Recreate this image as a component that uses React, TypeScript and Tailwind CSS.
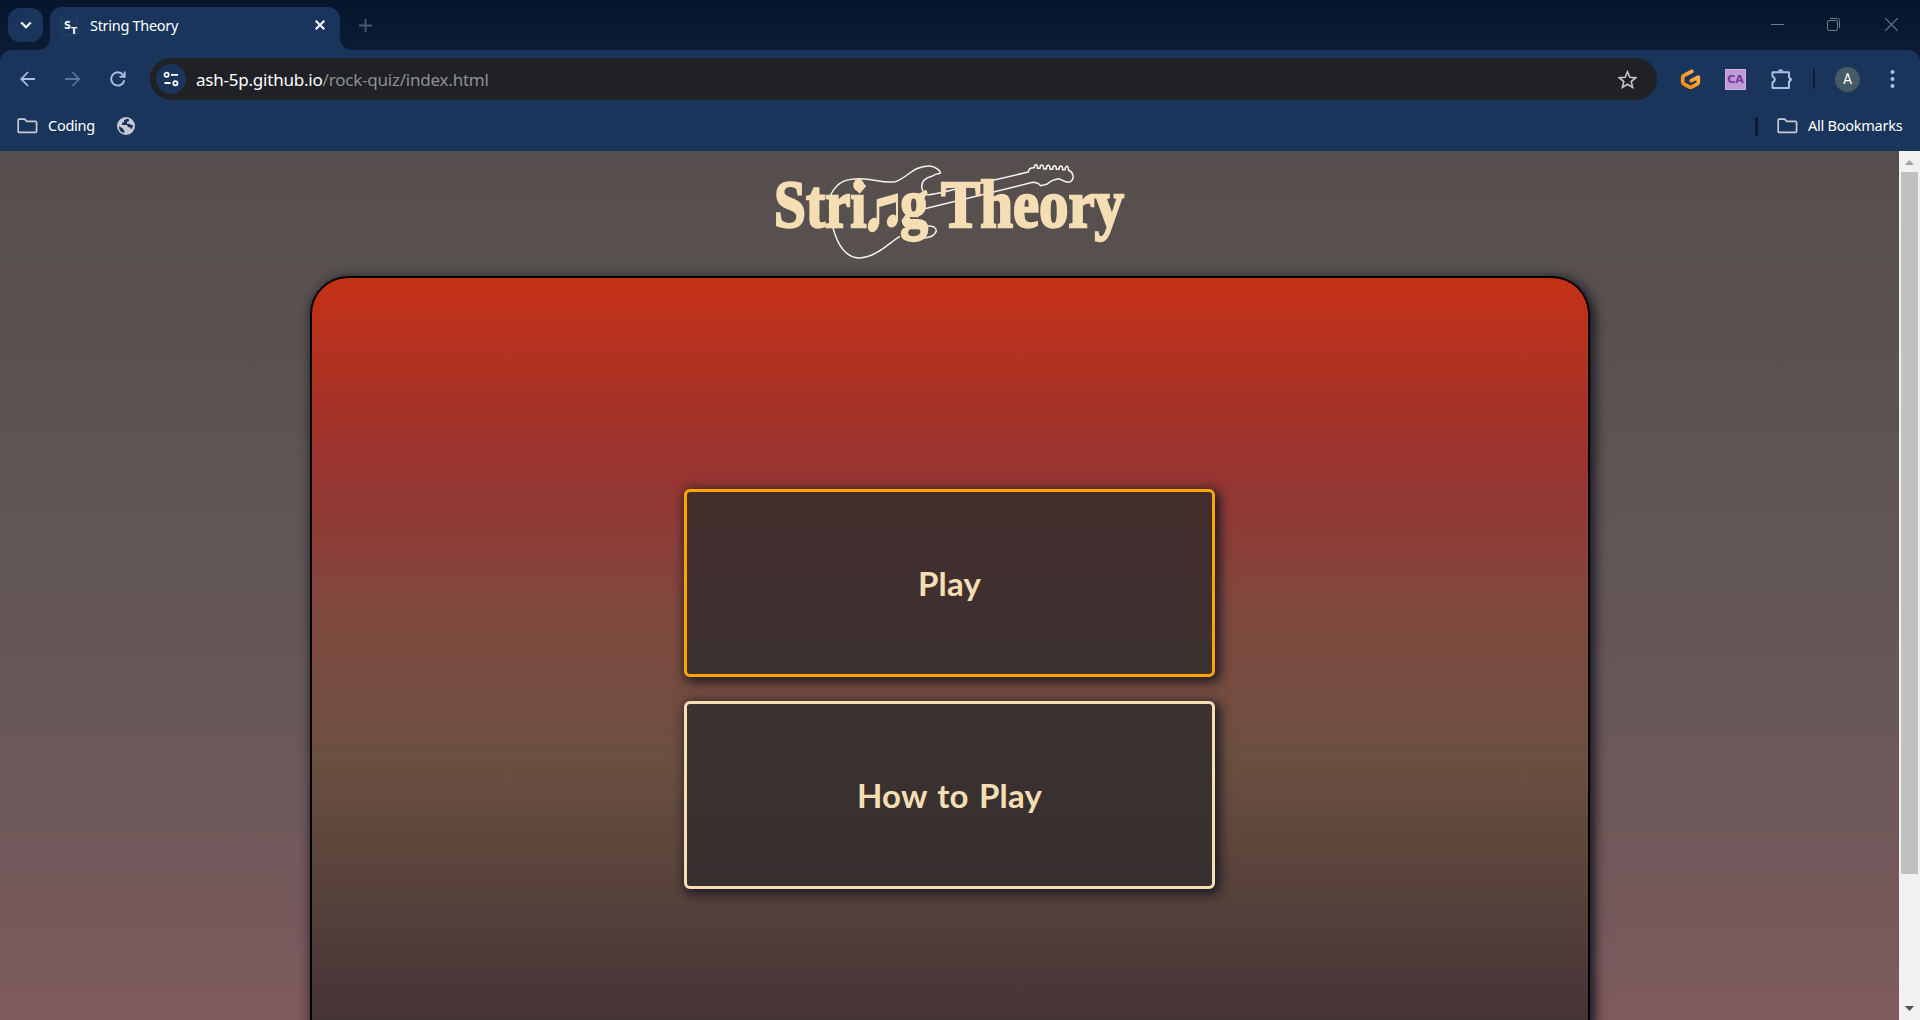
import React from "react";

const ui = "font-['Noto_Sans','Open_Sans',sans-serif]";

function Folder() {
  return (
    <svg className="h-[16px] w-[21px] shrink-0" viewBox="0 0 21 16" fill="none" stroke="#c9cbd0" strokeWidth="1.7">
      <path d="M1.2 13.3V2.2q0-1 1-1h5.4l2.2 2.2h8.8q1 0 1 1v8.9q0 1-1 1H2.2q-1 0-1-1z" />
    </svg>
  );
}

function TabStrip() {
  return (
    <div className="flex h-[50px] items-start bg-linear-to-b from-[#07162d] to-[#0b1b33]">
      <button className="mt-2 ml-2 flex h-[34px] w-[35px] items-center justify-center rounded-xl bg-[#1a355b]">
        <svg className="h-[8px] w-[12px]" viewBox="0 0 12 8" fill="none" stroke="#fff" strokeWidth="2.2">
          <path d="M1.2 1.5 6 6.2l4.8-4.7" />
        </svg>
      </button>
      <div className="relative mt-[7px] ml-[7px] flex h-[43px] w-[290px] rounded-t-xl bg-[#1a355b] pt-[8px] pl-[10px]">
        <svg className="absolute bottom-0 -left-[14px] h-[14px] w-[14px]" viewBox="0 0 14 14">
          <path d="M14 0v14H0Q14 14 14 0z" fill="#1a355b" />
        </svg>
        <svg className="absolute -right-[14px] bottom-0 h-[14px] w-[14px]" viewBox="0 0 14 14">
          <path d="M0 0v14h14Q0 14 0 0z" fill="#1a355b" />
        </svg>
        <svg className="h-[22px] w-[20px]" viewBox="0 0 20 22">
          <path d="M1 5V1l4 4q5 2 9-1l4-2-1 9 2 7q-3 3-9 2H2q-2-3 1-8z" fill="none" stroke="#2b4263" strokeWidth="1" />
          <text x="4" y="13.5" fontSize="10.5" fontWeight="800" fill="#fff" fontFamily="DejaVu Sans" textLength="7" lengthAdjust="spacingAndGlyphs">S</text>
          <text x="11" y="19" fontSize="9" fontWeight="800" fill="#fff" fontFamily="DejaVu Sans" textLength="6" lengthAdjust="spacingAndGlyphs">T</text>
        </svg>
        <span className={`ml-[10px] w-[160px] text-[14.5px] leading-[21px] tracking-[-0.3px] whitespace-nowrap text-white ${ui}`}>String Theory</span>
        <svg className="mt-[5px] ml-[65px] h-[10px] w-[10px]" viewBox="0 0 10 10" stroke="#fff" strokeWidth="2">
          <path d="m.7.7 8.6 8.6M9.3.7.7 9.3" />
        </svg>
      </div>
      <svg className="mt-[19px] ml-[19px] h-[13px] w-[13px]" viewBox="0 0 13 13" stroke="#45587a" strokeWidth="1.8">
        <path d="M6.5 0v13M0 6.5h13" />
      </svg>
      <div className="mt-[18px] mr-[22px] ml-auto flex">
        <svg className="h-[13px] w-[13px]" viewBox="0 0 13 13" stroke="#70798a">
          <path d="M0 6.5h13" />
        </svg>
        <svg className="ml-[43px] h-[13px] w-[13px]" viewBox="0 0 13 13" fill="none" stroke="#70798a">
          <rect x=".5" y="2.5" width="10" height="10" rx="1.5" />
          <path d="M3 .5h7.5q2 0 2 2V10" />
        </svg>
        <svg className="ml-[45px] h-[13px] w-[13px]" viewBox="0 0 13 13" stroke="#70798a" strokeWidth="1.2">
          <path d="m.3.3 12.4 12.4M12.7.3.3 12.7" />
        </svg>
      </div>
    </div>
  );
}

function Toolbar() {
  return (
    <div className="flex h-[58px] items-center pr-[24px] pl-[20px]">
      <svg className="h-[16px] w-[16px]" viewBox="0 0 16 16" fill="none" stroke="#a9bfe2" strokeWidth="1.8">
        <path d="M15 8H1.5M8 1 1.3 8 8 15" />
      </svg>
      <svg className="ml-[29px] h-[16px] w-[16px]" viewBox="0 0 16 16" fill="none" stroke="#58749f" strokeWidth="1.8">
        <path d="M0 8h14M7.5 1l6.7 7-6.7 7" />
      </svg>
      <svg className="ml-[29px] h-[16px] w-[16px]" viewBox="0 0 16 16" fill="none" stroke="#a9bfe2" strokeWidth="1.9">
        <path d="M14.3 9.2A6.6 6.6 0 1 1 13 3.8L14.6 5.6M14.7.5v5.3H9.5" />
      </svg>
      <div className="ml-[24px] flex h-[42px] w-[1507px] items-center rounded-full bg-[#202124] pr-[20px] pl-[6px]">
        <div className="flex h-[30px] w-[30px] items-center justify-center rounded-full bg-[#1a355b]">
          <svg className="h-[16px] w-[16px]" viewBox="0 0 16 16" fill="none" stroke="#fff" strokeWidth="1.8">
            <circle cx="3.6" cy="3.8" r="2.1" />
            <path d="M8 3.8h7M1.5 12h6" />
            <circle cx="12.4" cy="12.2" r="2.1" />
          </svg>
        </div>
        <span className={`ml-[10px] pt-[1px] text-[17px] leading-[24px] tracking-[-0.22px] whitespace-nowrap text-white ${ui}`}>
          ash-5p.github.io<span className="text-[#8d9094]">/rock-quiz/index.html</span>
        </span>
        <svg className="ml-auto h-[19px] w-[19px]" viewBox="0 0 19 19" fill="none" stroke="#c7c7c7" strokeWidth="1.6">
          <path d="m9.5 1.8 2.3 5.4 5.9.5-4.5 3.9 1.4 5.8-5.1-3.1-5.1 3.1 1.4-5.8L1.3 7.7l5.9-.5z" />
        </svg>
      </div>
      <svg className="ml-[23px] h-[21px] w-[21px] shrink-0" viewBox="0 0 21 21">
        <defs>
          <linearGradient id="orange" x1="1" y1="0" x2="0" y2="1">
            <stop offset="0" stopColor="#ffb45b" />
            <stop offset="1" stopColor="#ff8a00" />
          </linearGradient>
        </defs>
        <path d="M11.8 2.4 3.7 6.6q-1 .6-1 1.7v5q0 1 1 1.6l5.8 3.2q1 .5 2 0l5.8-3.2q1-.6 1-1.6V8.2L11.3 11.6" fill="none" stroke="url(#orange)" strokeWidth="3.7" strokeLinejoin="round" strokeLinecap="round" />
      </svg>
      <div className="ml-[24px] flex h-[21px] w-[21px] shrink-0 items-center justify-center border border-[#cfb3e4] bg-[#be9bd5] pt-[2px] font-['DejaVu_Sans',sans-serif] text-[11px] font-bold text-[#78359a]">
        CA
      </div>
      <svg className="ml-[25px] h-[21px] w-[22px] shrink-0" viewBox="0 0 22 21" fill="none" stroke="#a9bfe2" strokeWidth="2">
        <path d="M1.5 3.3H18v5.1l2 2-2 2v6.7H1.5v-5.4q4.8-3.1 0-6.3z" strokeLinejoin="round" />
        <path d="M7 2.6a2.6 2.4 0 0 1 5.2 0zM18 8a2.6 2.6 0 0 1 0 5.2z" fill="#a9bfe2" stroke="none" />
      </svg>
      <div className="ml-[20px] h-[20px] w-[2px] shrink-0 rounded bg-[#0b1b33]" />
      <div className="ml-[20px] flex h-[25px] w-[25px] shrink-0 items-center justify-center rounded-full bg-[#455a64] font-[Roboto,sans-serif] text-[14px] text-white">A</div>
      <svg className="ml-[30px] h-[18px] w-[5px] shrink-0" viewBox="0 0 5 18" fill="#a9bfe2">
        <circle cx="2.5" cy="2.1" r="2" />
        <circle cx="2.5" cy="9" r="2" />
        <circle cx="2.5" cy="15.9" r="2" />
      </svg>
    </div>
  );
}

function Bookmarks() {
  return (
    <div className={`flex h-[43px] items-center pr-[17px] pb-[7px] pl-[17px] text-[14.5px] text-white ${ui}`}>
      <Folder />
      <span className="ml-[10px] w-[47px] tracking-[-0.25px] whitespace-nowrap">Coding</span>
      <svg className="ml-[22px] h-[18px] w-[18px]" viewBox="0 0 18 18">
        <circle cx="9" cy="9" r="9" fill="#c7c9d2" />
        <path d="M10 1.8Q8 3 7 3v2L5 6v2h5l1 2.2h2l1 2.3q2-2 2.2-4.5H14l-1.5-1.3H10V5l2-1V2.2zM1.9 9.2Q2 15 7.3 16v-2.4l-1.2-1v-1.2z" fill="#1a355b" />
      </svg>
      <div className="mr-[19px] ml-auto h-[19px] w-[3px] rounded bg-[#0b1b33]" />
      <Folder />
      <span className="ml-[10px] w-[95px] tracking-[-0.25px] whitespace-nowrap">All Bookmarks</span>
    </div>
  );
}

function Logo() {
  return (
    <svg className="mt-[1px] h-[120px] w-[380px] shrink-0 overflow-visible" viewBox="0 0 1140 360" role="img">
      <g fill="none" stroke="#f4f2ee" strokeWidth="4.5" strokeLinejoin="round">
        <path d="M420 253C390 270 350 315 300 318C245 318 225 255 216 215C207 180 207 150 214 125C235 85 265 80 300 80C340 80 370 95 405 89C440 80 460 40 510 42C530 44 543 60 541 64Q525 66 515 73C495 78 485 90 485 105Q488 125 502 128Q520 128 590 110L805 60Q806 46 823 47Q823 38 828 38Q833 38 832 49H840Q840 39 845 39Q851 39 851 51H859Q859 40 865 40Q870 40 870 52H878Q878 41 884 41Q889 42 889 52H897Q897 42 903 42Q908 43 908 53H915Q916 43 921 43Q926 44 925 54C940 60 945 80 932 89C920 95 907 85 897 80Q875 83 860 97L842 101Q835 92 818 91L500 169Q475 172 472 196" />
        <path d="M500 222Q528 220 529 237C522 255 505 258 480 258" />
      </g>
      <g fill="#f5deb3" fontFamily="'Liberation Serif', serif" fontWeight="700" fontSize="204" stroke="#f5deb3" strokeWidth="7" strokeLinejoin="miter">
        <text x="42" y="225" textLength="277" lengthAdjust="spacingAndGlyphs">Stri</text>
        <text x="421" y="225" textLength="83" lengthAdjust="spacingAndGlyphs">g</text>
        <text x="543" y="225" textLength="549" lengthAdjust="spacingAndGlyphs">Theory</text>
      </g>
      <g fill="#f5deb3">
        <path d="M299 84 319 102 299 125 280 105z" />
        <ellipse cx="340" cy="219" rx="16" ry="22" transform="rotate(20 340 219)" />
        <ellipse cx="397" cy="207" rx="16" ry="20" transform="rotate(20 397 207)" />
        <path d="M350 216V142L414 124V208H408V151L358 165V216z" />
      </g>
    </svg>
  );
}

const choices = [
  { label: "Play", border: "border-[#ffa500]" },
  { label: "How to Play", border: "border-[#f5deb3]" },
];

export default function App() {
  return (
    <div className="flex h-[1020px] w-[1920px] flex-col overflow-hidden bg-[#0b1b33]">
      <TabStrip />
      <div className="rounded-t-xl bg-[#1a355b]">
        <Toolbar />
        <Bookmarks />
      </div>
      <div className="flex h-[869px]">
        <main className="flex w-[1899px] flex-col items-center overflow-hidden bg-[linear-gradient(#554e4e_0%,#57514f_13%,#605553_40%,#665858_60%,#7b5a5c_95%,#7d5b5c_100%)]">
          <Logo />
          <section className="mt-[4px] flex h-[1000px] w-[1280px] shrink-0 flex-col items-center gap-[24.5px] rounded-t-[38px] border-2 border-b-0 border-black bg-[linear-gradient(#c53116_0px,#9a332f_182px,#80483f_330px,#6b5040_482px,#443336_745px)] pt-[211px] shadow-[3px_3px_12px_2px_#1b1924]">
            {choices.map((c) => (
              <button
                key={c.label}
                className={`flex h-[187.5px] w-[531px] items-center justify-center rounded-md border-3 bg-[#2e2b2c]/80 pt-[2px] font-[Lato,sans-serif] text-[33px] font-bold tracking-[0.2px] text-[#f5deb3] [word-spacing:2px] shadow-[3px_3px_12px_2px_#1b1924] ${c.border}`}
              >
                {c.label}
              </button>
            ))}
          </section>
        </main>
        <aside className="flex w-[21px] flex-col items-center bg-[#f1f1f1]">
          <svg className="mt-[9px] h-[5px] w-[9px]" viewBox="0 0 9 5" fill="#a3a3a3">
            <path d="M0 5 4.5 0 9 5z" />
          </svg>
          <div className="mt-[7px] h-[702px] w-[17px] bg-[#c1c1c1]" />
          <svg className="mt-auto mb-[9px] h-[5px] w-[9px]" viewBox="0 0 9 5" fill="#505050">
            <path d="M0 0l4.5 5L9 0z" />
          </svg>
        </aside>
      </div>
    </div>
  );
}
